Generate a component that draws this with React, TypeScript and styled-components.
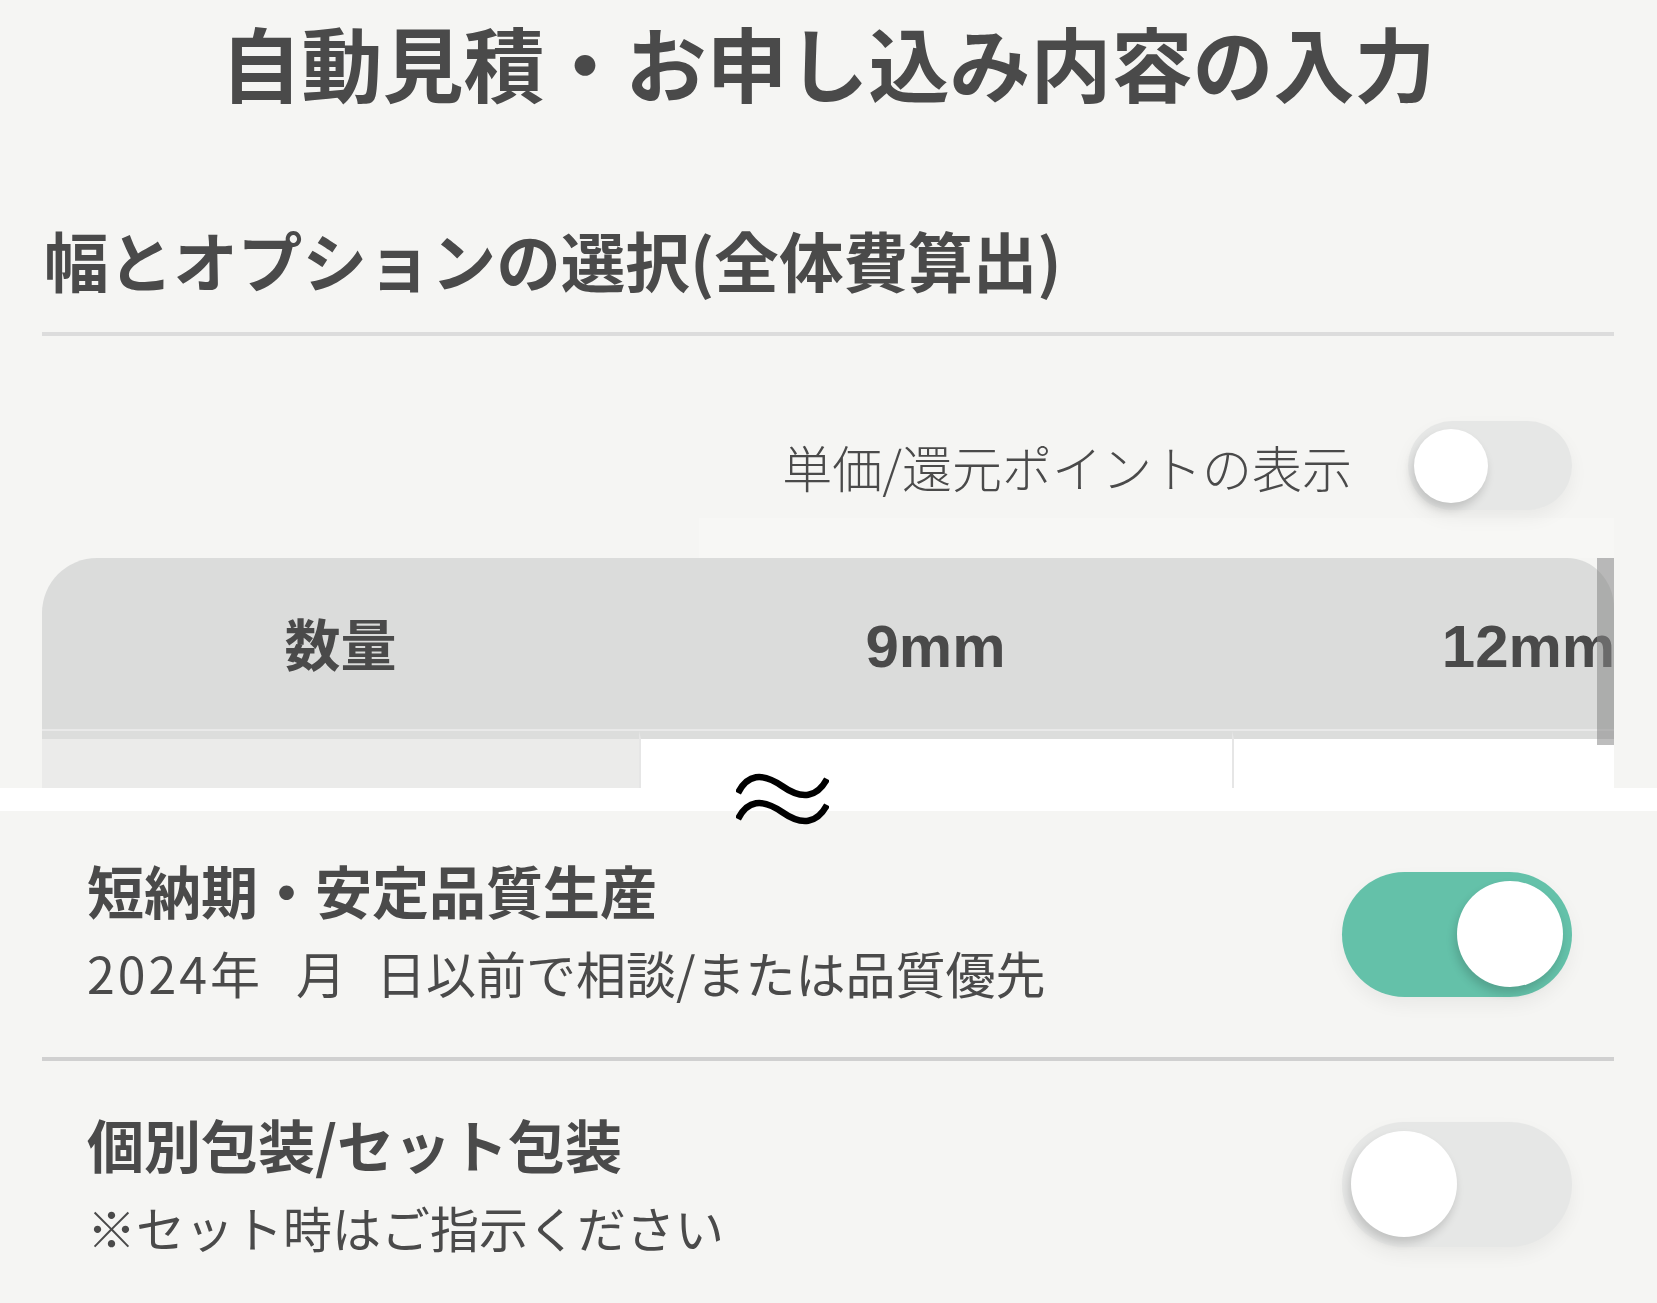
import React from "react";
import styled, { createGlobalStyle } from "styled-components";

const GlobalStyle = createGlobalStyle`
  *, *::before, *::after { box-sizing: border-box; }
  html, body { margin: 0; padding: 0; background: #f5f5f3; }
  body {
    font-family: "Noto Sans CJK JP", "Noto Sans", sans-serif;
    color: #4a4a4a;
  }
`;

const Page = styled.div`
  width: 1657px;
  min-height: 1303px;
  overflow: hidden;
  background: #f5f5f3;
`;

const Top = styled.section`
  padding: 0 43px 0 42px;
`;

const Title = styled.h1`
  margin: 0;
  padding-top: 21px;
  font-size: 81px;
  line-height: 80px;
  font-weight: 700;
  text-align: center;
  color: #4a4a4a;
`;

const SectionHeading = styled.h2`
  margin: 126px 0 0 2px;
  font-size: 64.6px;
  line-height: 64px;
  font-weight: 700;
  color: #4a4a4a;
`;

const Rule = styled.div<{ $color?: string }>`
  margin-top: 41px;
  height: 4px;
  background: ${(p) => p.$color ?? "#dcdcdc"};
`;

const ToggleRow = styled.div`
  margin-top: 85px;
  padding-right: 42px;
  display: flex;
  justify-content: flex-end;
  align-items: center;
  gap: 56px;
`;

const ToggleLabel = styled.span`
  font-size: 50px;
  line-height: 50px;
  font-weight: 300;
  color: #4a4a4a;
`;

const Track = styled.div<{ $on: boolean; $size: "sm" | "lg" }>`
  position: relative;
  flex: none;
  width: ${(p) => (p.$size === "lg" ? 230 : 164)}px;
  height: ${(p) => (p.$size === "lg" ? 125 : 89)}px;
  border-radius: 70px;
  background: ${(p) => (p.$on ? "#64c1a9" : "#e6e7e6")};
  box-shadow: 0 8px 18px rgba(0, 0, 0, 0.05);
  display: flex;
  align-items: center;
  justify-content: ${(p) => (p.$on ? "flex-end" : "flex-start")};
  padding: 0 ${(p) => (p.$size === "lg" ? 9 : 6)}px;
`;

const Knob = styled.div<{ $size: "sm" | "lg" }>`
  width: ${(p) => (p.$size === "lg" ? 106 : 74)}px;
  height: ${(p) => (p.$size === "lg" ? 106 : 74)}px;
  border-radius: 50%;
  background: #ffffff;
  box-shadow: -2px 6px 10px rgba(0, 0, 0, 0.16);
`;

const Switch = ({ on, size }: { on: boolean; size: "sm" | "lg" }) => (
  <Track $on={on} $size={size} role="switch" aria-checked={on}>
    <Knob $size={size} />
  </Track>
);

const ShadeRow = styled.div`
  height: 48px;
  display: flex;
  align-items: flex-end;
`;

const StickyShade = styled.div`
  margin-left: 657px;
  flex: 1;
  height: 40px;
  background: #f7f7f5;
`;

const TableFrame = styled.div`
  position: relative;
  margin: 0 43px 0 42px;
  height: 230px;
`;

const TableViewport = styled.div`
  height: 100%;
  overflow: hidden;
  border-radius: 55px 47px 0 0 / 55px 50px 0 0;
`;

const PriceGrid = styled.div`
  display: grid;
  grid-template-columns: 597px 593px 593px;
  width: max-content;
`;

const HeadCell = styled.div<{ $cjk?: boolean }>`
  height: 173px;
  background: #dbdcdb;
  border-bottom: 2px solid #e9e9e9;
  display: flex;
  align-items: center;
  justify-content: center;
  font-family: "Liberation Sans", "Noto Sans CJK JP", sans-serif;
  font-weight: 700;
  font-size: ${(p) => (p.$cjk ? 56 : 60)}px;
  line-height: 1;
  color: #4a4a4a;
  padding-top: 6px;
`;

const BodyCell = styled.div<{ $first?: boolean }>`
  height: 120px;
  border-top: 8px solid #dcdddc;
  border-left: ${(p) => (p.$first ? "none" : "2px solid #e6e6e6")};
  background: ${(p) => (p.$first ? "#ebebea" : "#ffffff")};
`;

const ScrollThumb = styled.div`
  position: absolute;
  top: 0;
  right: 0;
  width: 17px;
  height: 187px;
  background: rgba(133, 133, 133, 0.54);
`;

const CutBand = styled.div`
  position: relative;
  height: 23px;
  background: #ffffff;
`;

const CutMark = styled.svg`
  position: absolute;
  left: 736px;
  top: -16px;
  width: 93px;
  height: 54px;
`;

const OptionList = styled.section`
  padding: 0 43px 0 42px;
`;

const OptionRow = styled.div<{ $divider?: boolean }>`
  height: ${(p) => (p.$divider ? 250 : 246)}px;
  border-bottom: ${(p) => (p.$divider ? "4px solid #d0d0d0" : "none")};
  padding: 0 42px 0 45px;
  display: flex;
  align-items: center;
  justify-content: space-between;
`;

const OptionText = styled.div<{ $lift?: number }>`
  display: flex;
  flex-direction: column;
  margin-bottom: ${(p) => p.$lift ?? 0}px;
`;

const OptionTitle = styled.div`
  font-size: 57px;
  line-height: 68px;
  font-weight: 700;
  color: #4a4a4a;
  white-space: nowrap;
`;

const OptionNote = styled.div<{ $size: number; $gap: number }>`
  margin-top: ${(p) => p.$gap}px;
  font-size: ${(p) => p.$size}px;
  line-height: ${(p) => p.$size + 8}px;
  font-weight: 400;
  color: #4a4a4a;
  white-space: nowrap;
`;

const Year = styled.span`
  letter-spacing: 3px;
`;

const Blank = styled.span<{ $w: number }>`
  display: inline-block;
  width: ${(p) => p.$w}px;
`;

export default function App() {
  return (
    <>
      <GlobalStyle />
      <Page>
        <Top>
          <Title>自動見積・お申し込み内容の入力</Title>
          <SectionHeading>幅とオプションの選択(全体費算出)</SectionHeading>
          <Rule />
          <ToggleRow>
            <ToggleLabel>単価/還元ポイントの表示</ToggleLabel>
            <Switch on={false} size="sm" />
          </ToggleRow>
          <ShadeRow>
            <StickyShade />
          </ShadeRow>
        </Top>

        <TableFrame>
          <TableViewport>
            <PriceGrid>
              <HeadCell $cjk>数量</HeadCell>
              <HeadCell>9mm</HeadCell>
              <HeadCell>12mm</HeadCell>
              <BodyCell $first />
              <BodyCell />
              <BodyCell />
            </PriceGrid>
          </TableViewport>
          <ScrollThumb />
        </TableFrame>

        <CutBand>
          <CutMark viewBox="0 0 93 54" aria-hidden="true">
            <path
              d="M2 21 Q16 -7 46 14 T91 7"
              fill="none"
              stroke="#000"
              strokeWidth="6.5"
            />
            <path
              d="M2 47 Q16 19 46 40 T91 33"
              fill="none"
              stroke="#000"
              strokeWidth="6.5"
            />
          </CutMark>
        </CutBand>

        <OptionList>
          <OptionRow $divider>
            <OptionText $lift={12}>
              <OptionTitle>短納期・安定品質生産</OptionTitle>
              <OptionNote $size={50} $gap={20}>
                <Year>2024</Year>年<Blank $w={36} />月<Blank $w={30} />日以前で相談/または品質優先
              </OptionNote>
            </OptionText>
            <Switch on size="lg" />
          </OptionRow>
          <OptionRow>
            <OptionText $lift={4}>
              <OptionTitle>個別包装/セット包装</OptionTitle>
              <OptionNote $size={49} $gap={21}>
                ※セット時はご指示ください
              </OptionNote>
            </OptionText>
            <Switch on={false} size="lg" />
          </OptionRow>
        </OptionList>
      </Page>
    </>
  );
}
